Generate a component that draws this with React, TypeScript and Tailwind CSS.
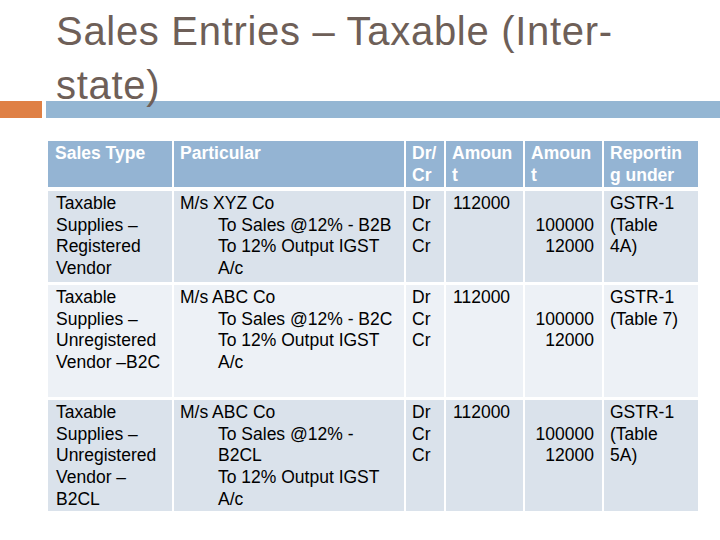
import React from 'react';

const cols = 'grid grid-cols-[124px_230px_38px_77px_77px_94px] gap-x-[2px]';

type Entry = {
    type: string[];
    party: string;
    lines: string[][];
    drcr: string[];
    reporting: string[];
    height: string;
    bg: string;
    gap: string;
};

const entries: Entry[] = [
    {
        type: ['Taxable', 'Supplies –', 'Registered', 'Vendor'],
        party: 'M/s XYZ Co',
        lines: [['To Sales @12% - B2B'], ['To 12% Output IGST', 'A/c']],
        drcr: ['Dr', 'Cr', 'Cr'],
        reporting: ['GSTR-1', '(Table', '4A)'],
        height: 'h-[91px]',
        bg: 'bg-[#dae2eb]',
        gap: 'mt-[4px]',
    },
    {
        type: ['Taxable', 'Supplies –', 'Unregistered', 'Vendor –B2C'],
        party: 'M/s ABC Co',
        lines: [['To Sales @12% - B2C'], ['To 12% Output IGST', 'A/c']],
        drcr: ['Dr', 'Cr', 'Cr'],
        reporting: ['GSTR-1', '(Table 7)'],
        height: 'h-[112px]',
        bg: 'bg-[#edf1f6]',
        gap: 'mt-[3px]',
    },
    {
        type: ['Taxable', 'Supplies –', 'Unregistered', 'Vendor –', 'B2CL'],
        party: 'M/s ABC Co',
        lines: [['To Sales @12% -', 'B2CL'], ['To 12% Output IGST', 'A/c']],
        drcr: ['Dr', 'Cr', 'Cr'],
        reporting: ['GSTR-1', '(Table', '5A)'],
        height: 'h-[111px]',
        bg: 'bg-[#dae2eb]',
        gap: 'mt-[3px]',
    },
];

const Lines: React.FC<{ items: string[] }> = ({ items }) => (
    <>
        {items.map((t, i) => (
            <div key={i} className="whitespace-nowrap">{t}</div>
        ))}
    </>
);

const App: React.FC = () => {
    return (
        <div
            className="w-[720px] h-[540px] bg-white overflow-hidden"
            style={{ fontFamily: '"Liberation Sans", Arial, sans-serif' }}
        >
            {/* title */}
            <div className="relative z-10 h-[101px] pt-[4px] pl-[56px] text-[40px] leading-[54px] text-[#6e5f58] tracking-[0.7px] whitespace-nowrap">
                Sales Entries – Taxable (Inter-
                <br />
                state)
            </div>
            <div className="flex gap-[4px] h-[17px]">
                <div className="w-[42px] bg-[#df8045]" />
                <div className="flex-1 bg-[#94b6d3]" />
            </div>

            {/* table */}
            <div className="mt-[23px] ml-[48px] text-[17.5px] leading-[21.7px] text-black">
                <div className={`${cols} h-[46px] font-bold text-white`}>
                    <div className="bg-[#94b4d3] px-[7px] pt-[2px]">Sales Type</div>
                    <div className="bg-[#94b4d3] px-[6px] pt-[2px]">Particular</div>
                    <div className="bg-[#94b4d3] px-[6px] pt-[2px]">Dr/<br />Cr</div>
                    <div className="bg-[#94b4d3] px-[6px] pt-[2px]">Amoun<br />t</div>
                    <div className="bg-[#94b4d3] px-[6px] pt-[2px]">Amoun<br />t</div>
                    <div className="bg-[#94b4d3] px-[6px] pt-[2px]">Reportin<br />g under</div>
                </div>

                {entries.map((e, i) => (
                    <div key={i} className={`${cols} ${e.height} ${e.gap}`}>
                        <div className={`${e.bg} px-[8px] pt-[2px]`}>
                            <Lines items={e.type} />
                        </div>
                        <div className={`${e.bg} px-[6px] pt-[2px]`}>
                            <div>{e.party}</div>
                            {e.lines.map((l, j) => (
                                <div key={j} className="pl-[38px]">
                                    <Lines items={l} />
                                </div>
                            ))}
                        </div>
                        <div className={`${e.bg} px-[6px] pt-[2px]`}>
                            <Lines items={e.drcr} />
                        </div>
                        <div className={`${e.bg} px-[7px] pt-[2px]`}>112000</div>
                        <div className={`${e.bg} px-[8px] pt-[2px] text-right`}>
                            <div>&nbsp;</div>
                            <div>100000</div>
                            <div>12000</div>
                        </div>
                        <div className={`${e.bg} px-[6px] pt-[2px]`}>
                            <Lines items={e.reporting} />
                        </div>
                    </div>
                ))}
            </div>
        </div>
    );
};

export default App;
